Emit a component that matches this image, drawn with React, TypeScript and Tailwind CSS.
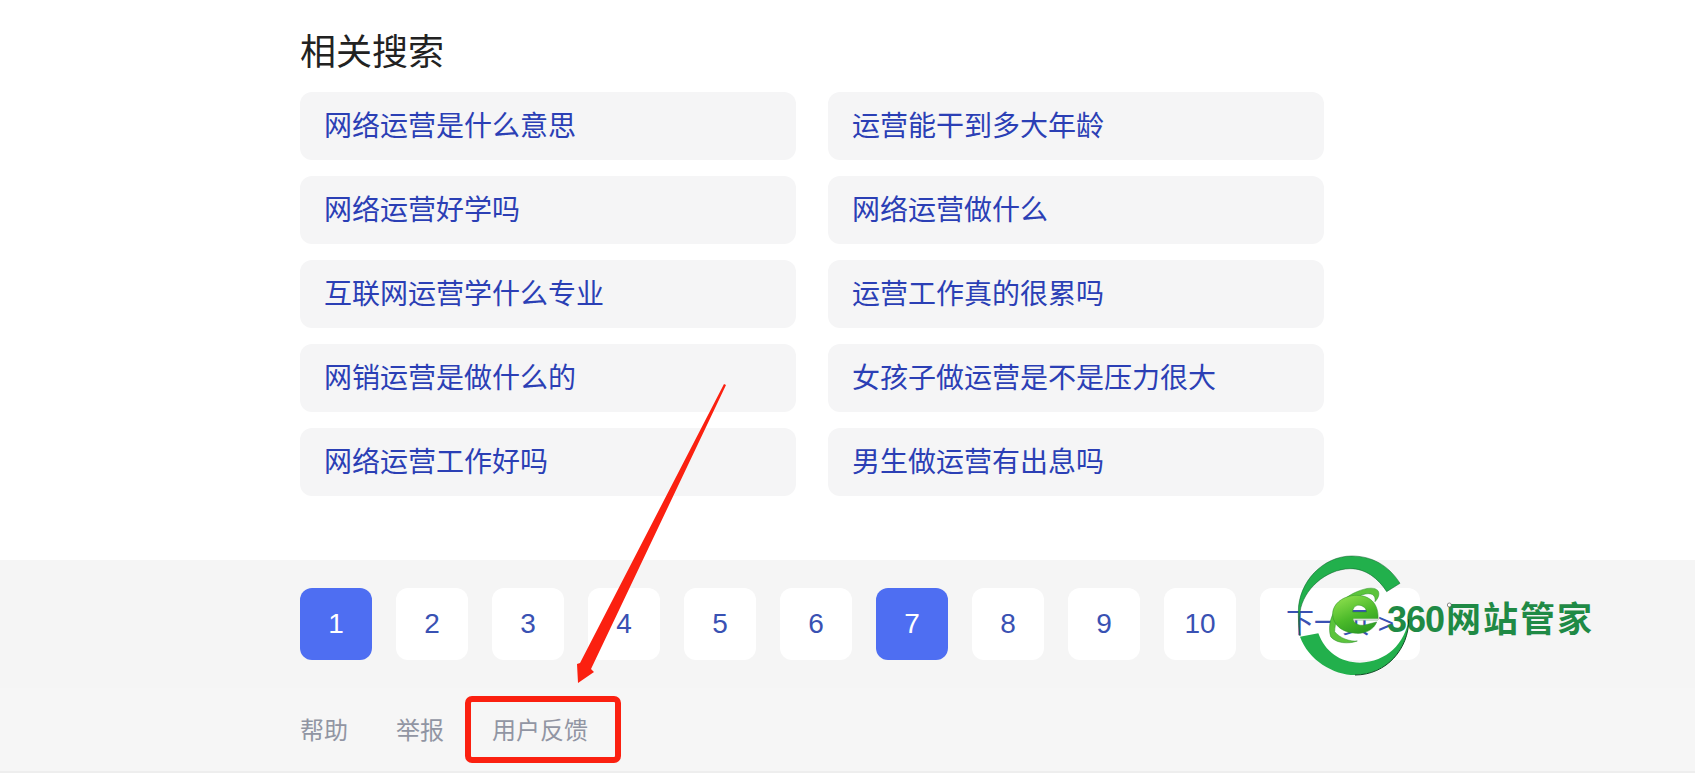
const cjk = "font-['Liberation_Sans','Noto_Sans_CJK_SC',sans-serif]";

const links = [
  ["网络运营是什么意思", "运营能干到多大年龄"],
  ["网络运营好学吗", "网络运营做什么"],
  ["互联网运营学什么专业", "运营工作真的很累吗"],
  ["网销运营是做什么的", "女孩子做运营是不是压力很大"],
  ["网络运营工作好吗", "男生做运营有出息吗"],
];

const pages = [1, 2, 3, 4, 5, 6, 7, 8, 9, 10];

function Logo() {
  return (
    <svg className="absolute left-[1240px] top-[540px]" width="380" height="150" viewBox="0 0 1140 450">
      <defs>
        <linearGradient id="ball" x1="0.2" y1="0" x2="0.7" y2="1">
          <stop offset="0" stopColor="#8fe04e" />
          <stop offset="0.55" stopColor="#4cba2a" />
          <stop offset="1" stopColor="#2a9a22" />
        </linearGradient>
      </defs>
      {/* outer ring */}
      <path
        d="M480 130 C445 75 395 48 335 48 C250 48 175 125 175 215 C175 245 177 270 180 288 C178 270 176 245 180 215 C190 150 255 88 330 86 C375 85 415 115 440 155 Z"
        fill="#22b04c"
        stroke="#0c5a28"
        strokeWidth="1.5"
      />
      <path
        d="M180 290 C205 360 280 405 345 405 C440 405 507 325 506 238 C495 310 440 366 360 368 C300 368 255 335 235 280 Z"
        fill="#22b04c"
      />
      <path d="M506 238 C507 325 440 405 345 405" fill="none" stroke="#0b4a22" strokeWidth="3" />
      {/* swoosh */}
      <path
        d="M272 290 C258 240 290 185 340 160 C370 145 402 138 414 152 C420 162 415 175 405 185 C408 165 395 155 365 165 C325 180 285 225 284 275 C300 295 330 305 352 303 C325 313 288 310 272 290 Z"
        fill="#5cc43c"
        stroke="#2a8f2a"
        strokeWidth="1.5"
      />
      {/* e body with see-through openings */}
      <path
        fillRule="evenodd"
        d="M350 166 C394 166 418 196 414 240 L340 240 C344 252 358 258 374 255 L410 246 C402 268 376 282 348 280 C306 278 278 254 278 222 C278 190 312 166 350 166 Z M338 216 L380 216 C378 200 362 194 352 196 C344 198 338 206 338 216 Z"
        fill="url(#ball)"
        stroke="#2a8f2a"
        strokeWidth="1.5"
      />
      <rect x="340" y="236" width="74" height="5" fill="#d6dcd6" />
      {/* registered mark next to the wordmark */}
      <circle cx="628" cy="195" r="6" fill="#ffffff" stroke="#555555" strokeWidth="2" />
    </svg>
  );
}

function Annotations() {
  return (
    <>
      <svg className="absolute left-0 top-0" width="1695" height="775">
        <polygon points="724,384 726,385 591,669 594,672 578,683 577,664 580,663" fill="#fb2010" />
      </svg>
      <div className="absolute left-[465px] top-[696px] h-[67px] w-[156px] rounded-[7px] border-[6px] border-[#fb2010]" />
      <div className={`absolute left-[1387px] top-[597px] flex items-center text-[36px] leading-[46px] font-bold text-[#1f8a45] ${cjk}`}>
        <span className="tracking-[-1px]">360</span>
        <span className="ml-[2px] text-[35px] tracking-[2px]">网站管家</span>
      </div>
      <Logo />
    </>
  );
}

export default function App() {
  return (
    <div className={`relative h-[775px] overflow-hidden bg-white ${cjk}`}>
      <div className="pl-[300px] pt-[28px]">
        <h2 className="text-[36px] leading-[50px] text-[#222222]">相关搜索</h2>
        <div className="mt-[14px] grid w-[1024px] grid-cols-2 gap-x-[32px] gap-y-[16px]">
          {links.flat().map((t) => (
            <a key={t} className="flex h-[68px] items-center rounded-[12px] bg-[#f5f5f6] pl-[24px] pt-[2px] text-[28px] text-[#2b3fb5]">
              {t}
            </a>
          ))}
        </div>
      </div>
      <div className="mt-[64px] bg-[#f5f5f5]">
        <div className="flex h-[128px] items-center gap-[24px] pl-[300px]">
          {pages.map((p) => (
            <a
              key={p}
              className={
                p === 1 || p === 7
                  ? "flex h-[72px] w-[72px] items-center justify-center rounded-[12px] bg-[#4e6ef2] text-[28px] text-white"
                  : "flex h-[72px] w-[72px] items-center justify-center rounded-[12px] bg-white text-[28px] text-[#3951b3]"
              }
            >
              {p}
            </a>
          ))}
          <a className="flex h-[72px] w-[160px] items-center justify-center rounded-[12px] bg-white text-[28px] text-[#3951b3]">
            下一页 &gt;
          </a>
        </div>
        <div className="flex h-[85px] items-center gap-[48px] border-b-2 border-[#eeeeee] bg-[#f6f6f6] pl-[300px] pt-[2px] text-[24px] text-[#9195a3]">
          <a>帮助</a>
          <a>举报</a>
          <a>用户反馈</a>
        </div>
      </div>
      <Annotations />
    </div>
  );
}
